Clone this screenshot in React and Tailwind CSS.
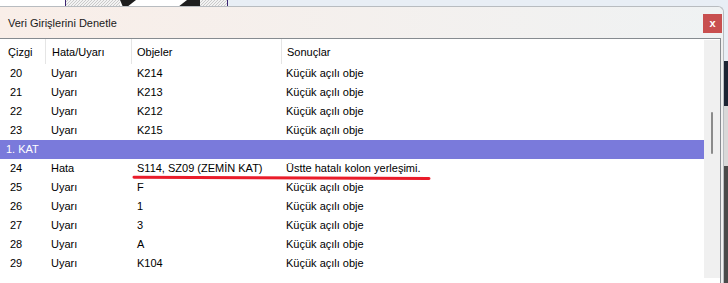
import React from 'react';

const font = { fontFamily: '"Liberation Sans", Arial, sans-serif' };

const before = [
  { no: 20, type: 'Uyarı', obj: 'K214', res: 'Küçük açılı obje' },
  { no: 21, type: 'Uyarı', obj: 'K213', res: 'Küçük açılı obje' },
  { no: 22, type: 'Uyarı', obj: 'K212', res: 'Küçük açılı obje' },
  { no: 23, type: 'Uyarı', obj: 'K215', res: 'Küçük açılı obje' },
];

const after = [
  { no: 24, type: 'Hata', obj: 'S114, SZ09 (ZEMİN KAT)', res: 'Üstte hatalı kolon yerleşimi.' },
  { no: 25, type: 'Uyarı', obj: 'F', res: 'Küçük açılı obje' },
  { no: 26, type: 'Uyarı', obj: '1', res: 'Küçük açılı obje' },
  { no: 27, type: 'Uyarı', obj: '3', res: 'Küçük açılı obje' },
  { no: 28, type: 'Uyarı', obj: 'A', res: 'Küçük açılı obje' },
  { no: 29, type: 'Uyarı', obj: 'K104', res: 'Küçük açılı obje' },
  { no: 30, type: 'Uyarı', obj: 'K103', res: 'Küçük açılı obje' },
];

function Row({ r }) {
  return (
    <div className="flex h-[19px] shrink-0 items-center text-[11px] text-black whitespace-nowrap">
      <div className="w-[46px] pl-[10px]">{r.no}</div>
      <div className="w-[86px] pl-[5px]">{r.type}</div>
      <div className="w-[150px] pl-[5px]">{r.obj}</div>
      <div className="flex-1 pl-[4px]">{r.res}</div>
    </div>
  );
}

function CadStrip() {
  // piece of the drawing behind the dialog
  return (
    <svg width="163" height="7" viewBox="0 0 163 7">
      <defs>
        <pattern id="hatch" width="3" height="3" patternUnits="userSpaceOnUse">
          <rect width="3" height="3" fill="#f2f2f2" />
          <path d="M0 3 L3 0" stroke="#b9b9b9" strokeWidth="0.7" />
        </pattern>
      </defs>
      <rect x="0" y="0" width="163" height="7" fill="#ffffff" />
      <rect x="1" y="0" width="54" height="7" fill="url(#hatch)" />
      <rect x="135" y="0" width="27" height="7" fill="url(#hatch)" />
      <path d="M55 0 L71 0 L62 7 L58 7 Z" fill="#1e1e1e" />
      <path d="M122 0 L135 0 L135 7 L113 7 Z" fill="#1e1e1e" />
      <rect x="0" y="0" width="1" height="7" fill="#3b2470" />
      <rect x="162" y="0" width="1" height="7" fill="#3b2470" />
    </svg>
  );
}

export default function App() {
  return (
    <div className="relative flex h-[283px] w-[728px] flex-col overflow-hidden bg-[#e8eef5]" style={font}>
      {/* background behind the dialog */}
      <div className="flex h-[6px] shrink-0">
        <div className="w-[65px] bg-white" />
        <CadStrip />
        <div className="flex-1" />
      </div>

      <div className="flex flex-1">
        {/* Dialog */}
        <div className="flex w-[724px] flex-col rounded-tr-[6px] border-t border-r border-[#b8bcc0] bg-[#f0f0f0]">
          <div className="flex h-[31px] shrink-0 items-center justify-between rounded-tr-[6px] bg-gradient-to-r from-[#f9eee8] to-[#eff2f3] pl-[8px] pr-[1px]">
            <span className="text-[11px] text-[#1a1a1a] pt-[1px]">Veri Girişlerini Denetle</span>
            <div className="mt-[2px] flex h-[19px] w-[19px] items-center justify-center bg-[#c84f4f] text-[11px] font-bold leading-none text-white">
              x
            </div>
          </div>

          <div className="flex flex-1 flex-col">
            <div className="flex h-[240px] w-[721px] border-t border-r border-[#868b90] bg-white">
              <div className="flex flex-1 flex-col overflow-hidden">
                <div className="flex h-[25px] shrink-0 text-[11px] text-black whitespace-nowrap">
                  <div className="flex w-[46px] items-center border-r border-[#e5e5e5] pl-[8px] pt-[2px]">Çizgi</div>
                  <div className="flex w-[86px] items-center border-r border-[#e5e5e5] pl-[6px] pt-[2px]">Hata/Uyarı</div>
                  <div className="flex w-[150px] items-center border-r border-[#e5e5e5] pl-[5px] pt-[2px]">Objeler</div>
                  <div className="flex flex-1 items-center pl-[5px] pt-[2px]">Sonuçlar</div>
                </div>
                {before.map((r) => (
                  <Row key={r.no} r={r} />
                ))}
                <div className="flex h-[19px] shrink-0 items-center bg-[#7a7adb] pl-[6px] text-[11px] text-white">1. KAT</div>
                {after.map((r) => (
                  <Row key={r.no} r={r} />
                ))}
              </div>
              {/* scrollbar */}
              <div className="mt-[1px] flex w-[16px] flex-col bg-[#f0f0f0]">
                <div className="ml-[7px] mt-[72px] h-[42px] w-[2px] rounded-full bg-[#8b8b8b]" />
              </div>
            </div>
            <div className="w-[721px] flex-1 border-r border-[#868b90] bg-white" />
          </div>
        </div>

        {/* edge of the window behind */}
        <div className="flex w-[4px] flex-col">
          <div className="h-[55px] bg-[#e8eef5]" />
          <div className="h-[45px] bg-[#1d2433]" />
          <div className="h-[60px] bg-[#d8d8d8]" />
          <div className="flex-1 bg-[#4a4a4a]" />
        </div>
      </div>

      {/* red annotation under row 24 */}
      <svg className="absolute left-0 top-0" width="728" height="283" viewBox="0 0 728 283">
        <path d="M134 177.2 L429 178.4" stroke="#ea1c2a" strokeWidth="3" strokeLinecap="round" fill="none" />
      </svg>
    </div>
  );
}
